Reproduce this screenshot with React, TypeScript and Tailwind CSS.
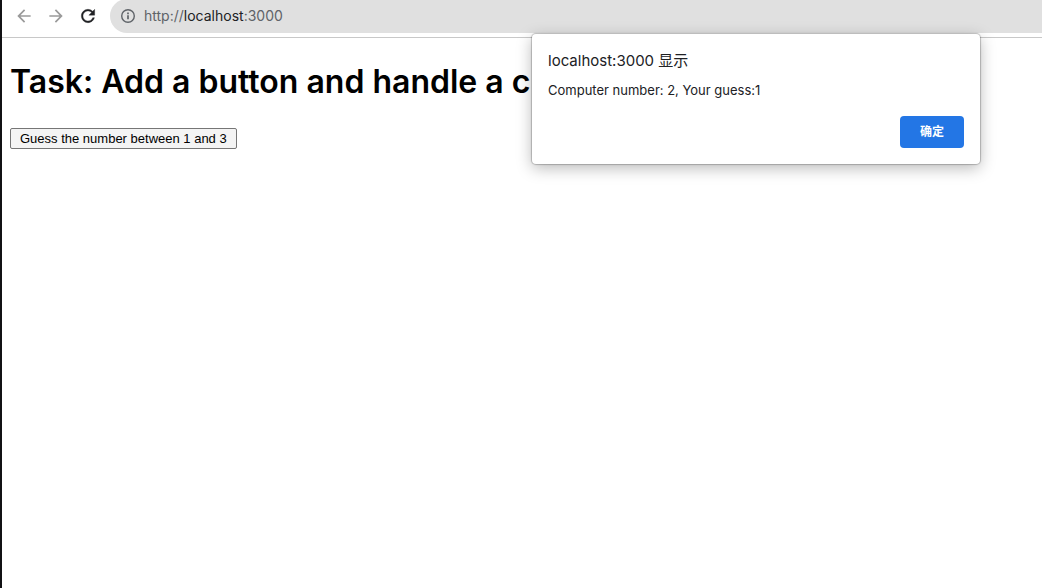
import { useState } from "react";

function BackIcon() {
  return (
    <svg viewBox="0 0 24 24" className="size-5" fill="currentColor" aria-hidden="true">
      <path d="M20 11H7.83l5.59-5.59L12 4l-8 8 8 8 1.41-1.41L7.83 13H20v-2z" />
    </svg>
  );
}

function ForwardIcon() {
  return (
    <svg viewBox="0 0 24 24" className="size-5" fill="currentColor" aria-hidden="true">
      <path d="M12 4l-1.41 1.41L16.17 11H4v2h12.17l-5.58 5.59L12 20l8-8-8-8z" />
    </svg>
  );
}

function ReloadIcon() {
  return (
    <svg viewBox="0 0 24 24" className="size-5" fill="currentColor" stroke="currentColor" strokeWidth="0.4" aria-hidden="true">
      <path d="M17.65 6.35C16.2 4.9 14.21 4 12 4c-4.42 0-7.99 3.58-7.99 8s3.57 8 7.99 8c3.73 0 6.84-2.55 7.73-6h-2.08c-.82 2.33-3.04 4-5.65 4-3.31 0-6-2.69-6-6s2.69-6 6-6c1.66 0 3.14.69 4.22 1.78L13 11h7V4l-2.35 2.35z" />
    </svg>
  );
}

function InfoIcon() {
  return (
    <svg viewBox="0 0 16 16" className="size-4" fill="none" stroke="currentColor" strokeWidth="1.4" aria-hidden="true">
      <circle cx="8" cy="8" r="6.3" />
      <path d="M8 7.2v4.1M8 4.6v1.6" strokeWidth="1.7" />
    </svg>
  );
}

function Toolbar() {
  return (
    <header className="flex h-[38px] items-start border-b border-[#c8c8c8] bg-white pl-3">
      <nav className="flex h-8 items-center gap-3 text-[#9a9a9a]" aria-label="Navigation">
        <button type="button" aria-label="Back"><BackIcon /></button>
        <button type="button" aria-label="Forward"><ForwardIcon /></button>
        <button type="button" aria-label="Reload" className="text-[#202124]"><ReloadIcon /></button>
      </nav>
      <div className="-mt-px ml-3 flex h-[34px] flex-1 items-center gap-2 rounded-l-full bg-[#e0e0e0] pl-[10px] text-[#5f6368]">
        <button type="button" aria-label="Site information"><InfoIcon /></button>
        <span className="font-['Inter','Liberation_Sans',sans-serif] text-sm">
          http://<span className="text-[#202124]">localhost</span>:3000
        </span>
      </div>
    </header>
  );
}

function AlertDialog({ onClose }: { onClose: () => void }) {
  return (
    <div
      role="alertdialog"
      aria-labelledby="alert-title"
      aria-describedby="alert-message"
      className="absolute top-[34px] left-[530px] flex w-[448px] flex-col rounded-[4px] bg-white p-4 font-['Inter','Noto_Sans_CJK_SC',sans-serif] text-[#202124] shadow-[0_0_1px_1px_rgba(0,0,0,0.22),0_4px_16px_rgba(0,0,0,0.28)]"
    >
      <h2 id="alert-title" className="text-[15px] leading-[22px]">localhost:3000 显示</h2>
      <p id="alert-message" className="mt-2 text-[13px] leading-5">Computer number: 2, Your guess:1</p>
      <button
        type="button"
        onClick={onClose}
        className="mt-4 h-8 w-16 self-end rounded-[4px] bg-[#2376e5] text-xs font-bold text-white"
      >
        确定
      </button>
    </div>
  );
}

export default function App() {
  const [open, setOpen] = useState(true);
  return (
    <div className="relative min-h-screen overflow-hidden border-l-2 border-[#111114] bg-white">
      <Toolbar />
      <main className="flex flex-col items-start px-2 pt-6 text-black">
        <h1 className="font-['Inter','Liberation_Sans',sans-serif] text-[32px] leading-10 font-semibold whitespace-nowrap">
          Task: Add a button and handle a c
        </h1>
        <button
          type="button"
          onClick={() => setOpen(true)}
          className="mt-[26px] rounded-[2px] border border-[#767676] bg-[#f4f4f4] px-[9px] font-['Liberation_Sans',Arial,sans-serif] text-[13px] leading-[19px]"
        >
          Guess the number between 1 and 3
        </button>
      </main>
      {open && <AlertDialog onClose={() => setOpen(false)} />}
    </div>
  );
}
